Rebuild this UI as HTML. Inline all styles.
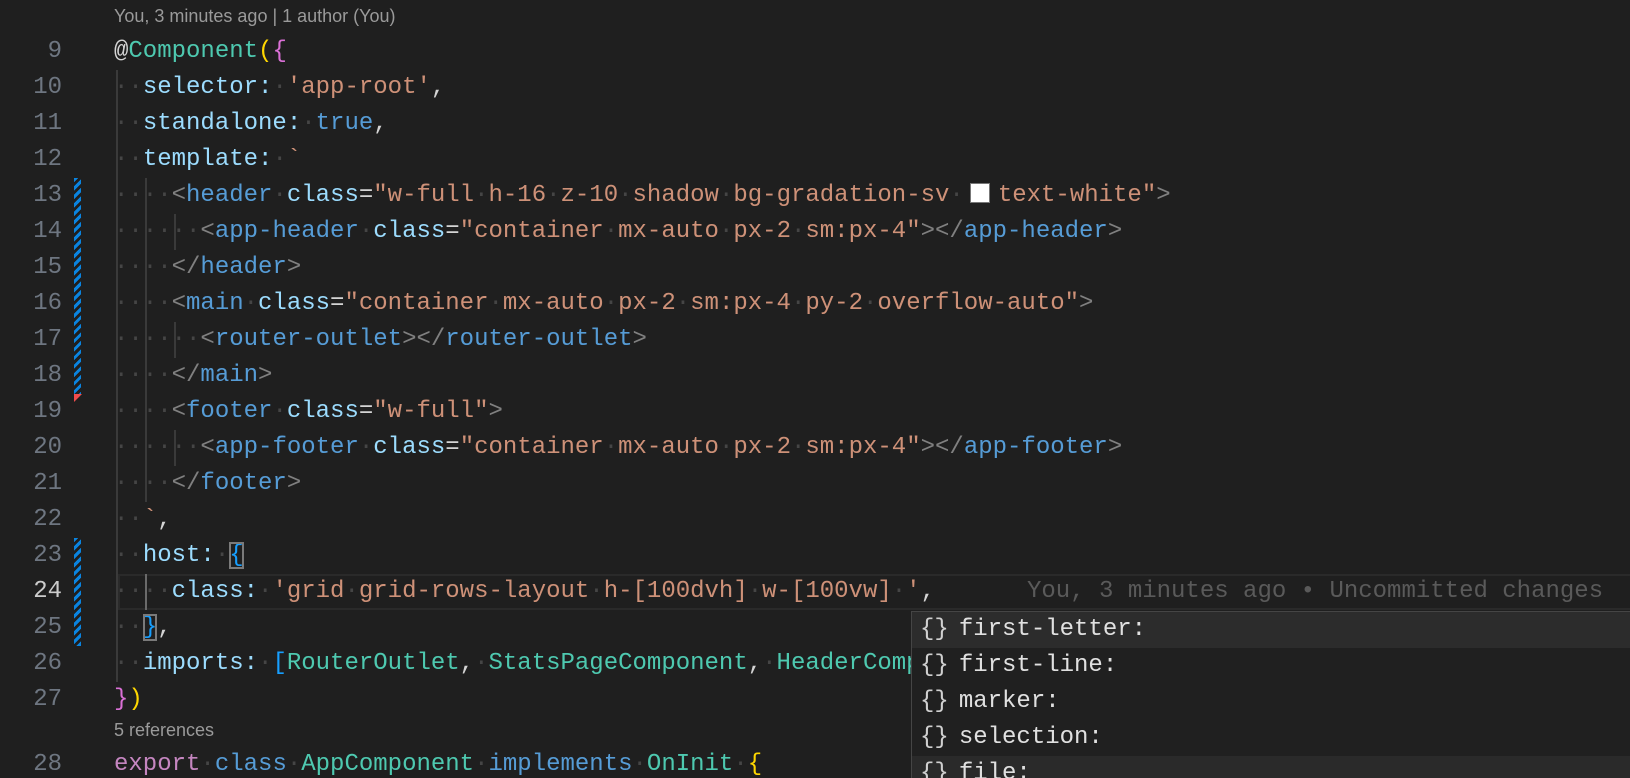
<!DOCTYPE html>
<html><head><meta charset="utf-8"><style>
html,body{margin:0;padding:0;background:#1f1f1f;width:1630px;height:778px;overflow:hidden;position:relative}
.l{position:absolute;left:114px;height:36px;line-height:36px;font-family:"Liberation Mono",monospace;font-size:24px;color:#d4d4d4;white-space:pre}
.n{position:absolute;width:62px;left:0;text-align:right;height:36px;line-height:36px;font-family:"Liberation Mono",monospace;font-size:24px;color:#6e7681}
.p{color:#9cdcfe}.s{color:#ce9178}.k{color:#569cd6}.t{color:#4ec9b0}.g{color:#808080}.w{color:#454545}
.y{color:#ffd700}.m{color:#da70d6}.b{color:#179fff}.e{color:#c586c0}
.lens{position:absolute;left:114px;font-family:"Liberation Sans",sans-serif;font-size:18px;color:#9a9a9a}
.gd{position:absolute;width:2px;background:#3a3a3a}
.bar{position:absolute;left:74px;width:7px;background:repeating-linear-gradient(135deg,#0a84e0 0 3px,transparent 3px 6px)}
.sw{display:inline-block;width:18px;height:18px;background:#fff;border:1px solid #777;vertical-align:-2px;margin:0 8px 0 6px}
.sg{position:absolute;left:911px;top:611px;width:730px;height:180px;background:#202020;border:1px solid #454545;font-family:"Liberation Mono",monospace;font-size:24px;color:#e0e0e0}
.row{height:36px;line-height:36px;padding-left:8px;white-space:pre}
.row .i{color:#d0d0d0;margin-right:10px}
</style></head><body>
<div class="lens" style="top:6px">You, 3 minutes ago | 1 author (You)</div>
<div class="lens" style="top:720px">5 references</div>

<!-- current line highlight -->
<div style="position:absolute;left:118px;top:574px;width:1520px;height:32px;border:2px solid #2a2a2a;border-right:none"></div>

<!-- guides -->
<div class="gd" style="left:116px;top:70px;height:612px"></div>
<div class="gd" style="left:145px;top:178px;height:324px"></div>
<div class="gd" style="left:145px;top:574px;height:36px;background:#6a6a6a"></div>
<div class="gd" style="left:174px;top:214px;height:36px"></div>
<div class="gd" style="left:174px;top:322px;height:36px"></div>
<div class="gd" style="left:174px;top:430px;height:36px"></div>

<!-- gutter bars -->
<div class="bar" style="top:178px;height:216px"></div>
<div style="position:absolute;left:74px;top:394px;width:0;height:0;border-top:8px solid #f14c4c;border-right:8px solid transparent"></div>
<div class="bar" style="top:538px;height:108px"></div>

<div class="n" style="top:34px">9</div>
<div class="n" style="top:70px">10</div>
<div class="n" style="top:106px">11</div>
<div class="n" style="top:142px">12</div>
<div class="n" style="top:178px">13</div>
<div class="n" style="top:214px">14</div>
<div class="n" style="top:250px">15</div>
<div class="n" style="top:286px">16</div>
<div class="n" style="top:322px">17</div>
<div class="n" style="top:358px">18</div>
<div class="n" style="top:394px">19</div>
<div class="n" style="top:430px">20</div>
<div class="n" style="top:466px">21</div>
<div class="n" style="top:502px">22</div>
<div class="n" style="top:538px">23</div>
<div class="n" style="top:574px;color:#cccccc">24</div>
<div class="n" style="top:610px">25</div>
<div class="n" style="top:646px">26</div>
<div class="n" style="top:682px">27</div>
<div class="n" style="top:747px">28</div>

<div class="l" style="top:34px">@<span class="t">Component</span><span class="y">(</span><span class="m">{</span></div>
<div class="l" style="top:70px"><span class="w">··</span><span class="p">selector:</span><span class="w">·</span><span class="s">'app-root'</span>,</div>
<div class="l" style="top:106px"><span class="w">··</span><span class="p">standalone:</span><span class="w">·</span><span class="k">true</span>,</div>
<div class="l" style="top:142px"><span class="w">··</span><span class="p">template:</span><span class="w">·</span><span class="s">`</span></div>
<div class="l" style="top:178px"><span class="w">····</span><span class="g">&lt;</span><span class="k">header</span><span class="w">·</span><span class="p">class</span>=<span class="s">"w-full<span class="w">·</span>h-16<span class="w">·</span>z-10<span class="w">·</span>shadow<span class="w">·</span>bg-gradation-sv<span class="w">·</span><span class="sw"></span>text-white"</span><span class="g">&gt;</span></div>
<div class="l" style="top:214px"><span class="w">······</span><span class="g">&lt;</span><span class="k">app-header</span><span class="w">·</span><span class="p">class</span>=<span class="s">"container<span class="w">·</span>mx-auto<span class="w">·</span>px-2<span class="w">·</span>sm:px-4"</span><span class="g">&gt;&lt;/</span><span class="k">app-header</span><span class="g">&gt;</span></div>
<div class="l" style="top:250px"><span class="w">····</span><span class="g">&lt;/</span><span class="k">header</span><span class="g">&gt;</span></div>
<div class="l" style="top:286px"><span class="w">····</span><span class="g">&lt;</span><span class="k">main</span><span class="w">·</span><span class="p">class</span>=<span class="s">"container<span class="w">·</span>mx-auto<span class="w">·</span>px-2<span class="w">·</span>sm:px-4<span class="w">·</span>py-2<span class="w">·</span>overflow-auto"</span><span class="g">&gt;</span></div>
<div class="l" style="top:322px"><span class="w">······</span><span class="g">&lt;</span><span class="k">router-outlet</span><span class="g">&gt;&lt;/</span><span class="k">router-outlet</span><span class="g">&gt;</span></div>
<div class="l" style="top:358px"><span class="w">····</span><span class="g">&lt;/</span><span class="k">main</span><span class="g">&gt;</span></div>
<div class="l" style="top:394px"><span class="w">····</span><span class="g">&lt;</span><span class="k">footer</span><span class="w">·</span><span class="p">class</span>=<span class="s">"w-full"</span><span class="g">&gt;</span></div>
<div class="l" style="top:430px"><span class="w">······</span><span class="g">&lt;</span><span class="k">app-footer</span><span class="w">·</span><span class="p">class</span>=<span class="s">"container<span class="w">·</span>mx-auto<span class="w">·</span>px-2<span class="w">·</span>sm:px-4"</span><span class="g">&gt;&lt;/</span><span class="k">app-footer</span><span class="g">&gt;</span></div>
<div class="l" style="top:466px"><span class="w">····</span><span class="g">&lt;/</span><span class="k">footer</span><span class="g">&gt;</span></div>
<div class="l" style="top:502px"><span class="w">··</span><span class="s">`</span>,</div>
<div class="l" style="top:538px"><span class="w">··</span><span class="p">host:</span><span class="w">·</span><span class="b" style="outline:2px solid #7a7a7a;outline-offset:-2px">{</span></div>
<div class="l" style="top:574px"><span class="w">····</span><span class="p">class:</span><span class="w">·</span><span class="s">'grid<span class="w">·</span>grid-rows-layout<span class="w">·</span>h-[100dvh]<span class="w">·</span>w-[100vw]<span class="w">·</span>'</span>,</div>
<div class="l" style="top:574px;left:1027px;color:#5a5a5a">You, 3 minutes ago • Uncommitted changes</div>
<div class="l" style="top:610px"><span class="w">··</span><span class="b" style="outline:2px solid #7a7a7a;outline-offset:-2px">}</span>,</div>
<div class="l" style="top:646px"><span class="w">··</span><span class="p">imports:</span><span class="w">·</span><span class="b">[</span><span class="t">RouterOutlet</span>,<span class="w">·</span><span class="t">StatsPageComponent</span>,<span class="w">·</span><span class="t">HeaderComponent</span></div>
<div class="l" style="top:682px"><span class="m">}</span><span class="y">)</span></div>
<div class="l" style="top:747px"><span class="e">export</span><span class="w">·</span><span class="k">class</span><span class="w">·</span><span class="t">AppComponent</span><span class="w">·</span><span class="k">implements</span><span class="w">·</span><span class="t">OnInit</span><span class="w">·</span><span class="y">{</span></div>

<div class="sg">
<div class="row" style="background:#2c2c2c"><span class="i">{}</span>first-letter:</div>
<div class="row"><span class="i">{}</span>first-line:</div>
<div class="row"><span class="i">{}</span>marker:</div>
<div class="row"><span class="i">{}</span>selection:</div>
<div class="row" style="background:#2a2a2a"><span class="i">{}</span>file:</div>
</div>
</body></html>
